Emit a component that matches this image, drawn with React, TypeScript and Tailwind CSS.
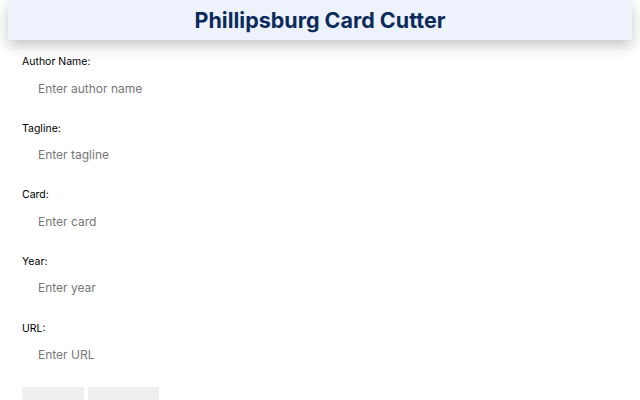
const fields = [
  { label: 'Author Name:', placeholder: 'Enter author name' },
  { label: 'Tagline:', placeholder: 'Enter tagline' },
  { label: 'Card:', placeholder: 'Enter card' },
  { label: 'Year:', placeholder: 'Enter year' },
  { label: 'URL:', placeholder: 'Enter URL' },
]

export default function App() {
  return (
    <div className="w-[640px] h-[400px] overflow-hidden bg-white font-['Inter',sans-serif]">
      <header className="mx-2 h-10 flex items-center justify-center bg-[#eef2fd] shadow-[0_6px_14px_rgba(0,0,0,0.22)]">
        <h1 className="text-[21.5px] font-bold text-[#0b2b5c]">Phillipsburg Card Cutter</h1>
      </header>

      <form className="px-[22px] pt-[14px]">
        {fields.map((f) => (
          <div key={f.label} className="mb-[14.67px]">
            <label className="block h-4 leading-4 text-[10.5px] text-black">{f.label}</label>
            <input
              type="text"
              placeholder={f.placeholder}
              className="block w-[300px] h-9 pl-4 text-[12px] text-gray-700 placeholder-[#777] outline-none bg-transparent"
            />
          </div>
        ))}
        <div className="flex gap-1">
          <button type="button" className="w-[62px] h-8 bg-[#efefef]" />
          <button type="button" className="w-[71px] h-8 bg-[#efefef]" />
        </div>
      </form>
    </div>
  )
}
